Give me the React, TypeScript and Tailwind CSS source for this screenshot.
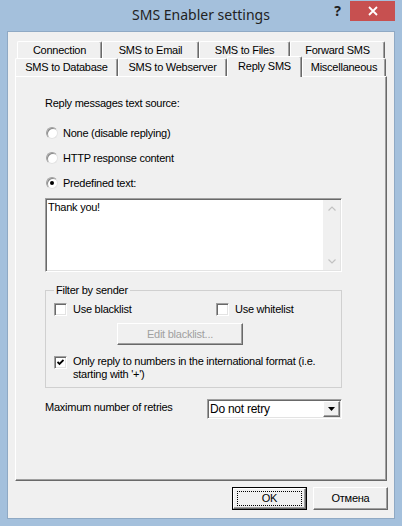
import React from "react";

const raised =
  "border border-t-white border-l-white border-r-[#696969] border-b-[#696969] shadow-[inset_-1px_-1px_0_#a0a0a0]";
const sunken =
  "border border-t-[#a0a0a0] border-l-[#a0a0a0] border-r-white border-b-white shadow-[inset_1px_1px_0_#696969,inset_-1px_-1px_0_#e3e3e3]";

function Tab({ label, width, selected }: { label: string; width: number; selected?: boolean }) {
  return (
    <div
      style={{ width }}
      className={
        "flex items-center justify-center rounded-t-[2px] border-t border-l border-r border-t-white border-l-white border-r-[#696969] bg-[#f0f0f0] shadow-[inset_-1px_0_0_#a0a0a0] " +
        (selected ? "relative z-10 h-[21px] -mb-[1px] pb-[2px]" : "h-[18px]")
      }
    >
      {label}
    </div>
  );
}

function Radio({ label, checked, className }: { label: string; checked?: boolean; className?: string }) {
  return (
    <div className={"flex h-[14px] items-center " + (className ?? "")}>
      <div className="ml-[1px] flex h-[12px] w-[12px] items-center justify-center rounded-full border border-t-[#a0a0a0] border-l-[#a0a0a0] border-r-[#e3e3e3] border-b-[#e3e3e3] bg-white shadow-[inset_1px_1px_0_#8a8a8a]">
        {checked && <div className="h-[4px] w-[4px] rounded-full bg-black" />}
      </div>
      <span className="ml-[5px]">{label}</span>
    </div>
  );
}

function Checkbox({ checked }: { checked?: boolean }) {
  return (
    <div className={"flex h-[13px] w-[13px] shrink-0 items-center justify-center bg-white " + sunken}>
      {checked && (
        <svg width="7" height="7" viewBox="0 0 7 7">
          <path d="M0.5 3 L2.5 5 L6.5 1" stroke="#000" strokeWidth="1.8" fill="none" />
        </svg>
      )}
    </div>
  );
}

function DialogButton({ text, isDefault }: { text: string; isDefault?: boolean }) {
  if (isDefault) {
    return (
      <div className="h-[23px] w-[75px] border border-black">
        <div className={"flex h-full w-full items-center justify-center bg-[#f0f0f0] " + raised}>
          <div className="flex h-[15px] w-[65px] items-center justify-center border border-dotted border-black">
            {text}
          </div>
        </div>
      </div>
    );
  }
  return (
    <div className={"flex h-[23px] w-[75px] items-center justify-center bg-[#f0f0f0] " + raised}>{text}</div>
  );
}

export default function App() {
  return (
    <div className="flex h-[526px] w-[402px] flex-col bg-[#a4c0dc] font-['Liberation_Sans',Arial,sans-serif] text-[11px] leading-[13px] tracking-[-0.25px] text-black">
      {/* title bar */}
      <div className="relative flex h-[31px] items-start">
        <div className="flex h-[31px] flex-1 items-center justify-center pb-[2px] font-['Noto_Sans',sans-serif] text-[14px] tracking-normal text-[#222]">
          SMS Enabler settings
        </div>
        <div className="absolute right-[7px] top-[1px] flex items-start">
          <div className="mr-[9px] mt-[3px] font-['Noto_Sans',sans-serif] text-[14px] font-bold tracking-normal text-[#222]">
            ?
          </div>
          <div className="flex h-[20px] w-[45px] items-center justify-center bg-[#c75050]">
            <svg width="10" height="10" viewBox="0 0 10 10">
              <path d="M1 1 L9 9 M9 1 L1 9" stroke="#fff" strokeWidth="1.8" />
            </svg>
          </div>
        </div>
      </div>

      {/* client area */}
      <div className="mx-[7px] mb-[7px] flex flex-1 flex-col border border-[#8fa9c4] bg-[#f0f0f0]">
        <div className="ml-[9px] mt-[9px] flex h-[17px] items-start">
          <Tab label="Connection" width={85} />
          <Tab label="SMS to Email" width={97} />
          <Tab label="SMS to Files" width={91} />
          <Tab label="Forward SMS" width={95} />
        </div>
        <div className="-mt-[2px] ml-[7px] flex h-[20px] items-end">
          <Tab label="SMS to Database" width={103} />
          <Tab label="SMS to Webserver" width={109} />
          <Tab label="Reply SMS" width={75} selected />
          <Tab label="Miscellaneous" width={84} />
        </div>

        {/* panel */}
        <div className={"ml-[7px] flex h-[405px] w-[372px] flex-col px-[29px] " + raised}>
          <div className="mt-[20px] h-[14px]">Reply messages text source:</div>
          <Radio label="None (disable replying)" className="mt-[15px]" />
          <Radio label="HTTP response content" className="mt-[11px]" />
          <Radio label="Predefined text:" checked className="mt-[11px]" />

          <div className={"mt-[8px] flex h-[74px] w-[297px] bg-white " + sunken}>
            <div className="flex-1 pl-[2px] pt-[2px]">Thank you!</div>
            <div className="my-[1px] mr-[1px] flex w-[17px] flex-col items-center justify-between bg-[#f0f0f0] py-[6px]">
              <svg width="8" height="5" viewBox="0 0 8 5">
                <path d="M0.5 4.5 L4 1 L7.5 4.5" stroke="#c2c2c2" strokeWidth="1.2" fill="none" />
              </svg>
              <svg width="8" height="5" viewBox="0 0 8 5">
                <path d="M0.5 0.5 L4 4 L7.5 0.5" stroke="#c2c2c2" strokeWidth="1.2" fill="none" />
              </svg>
            </div>
          </div>

          <fieldset className="mt-[11px] h-[105px] w-[297px] border border-[#d0d0d0] px-[8px]">
            <legend className="ml-[0px] px-[2px] leading-[14px]">Filter by sender</legend>
            <div className="mt-[6px] flex h-[13px] items-center">
              <div className="flex w-[162px] items-center">
                <Checkbox />
                <span className="ml-[6px]">Use blacklist</span>
              </div>
              <div className="flex items-center">
                <Checkbox />
                <span className="ml-[6px]">Use whitelist</span>
              </div>
            </div>
            <div
              className={
                "ml-[63px] mt-[7px] flex h-[22px] w-[126px] items-center justify-center bg-[#f0f0f0] text-[#a0a0a0] " +
                raised
              }
            >
              Edit blacklist...
            </div>
            <div className="mt-[10px] flex items-start">
              <div className="mt-[1px]">
                <Checkbox checked />
              </div>
              <span className="ml-[6px]">
                Only reply to numbers in the international format (i.e.
                <br />
                starting with '+')
              </span>
            </div>
          </fieldset>

          <div className="mt-[11px] flex h-[20px] w-[297px] items-start">
            <div className="w-[162px] pt-[2px]">Maximum number of retries</div>
            <div className={"flex h-[20px] w-[135px] items-center bg-white " + sunken}>
              <div className="flex-1 pl-[2px] text-[12px]">Do not retry</div>
              <div className={"mr-[1px] flex h-[16px] w-[17px] items-center justify-center bg-[#f0f0f0] " + raised}>
                <svg width="7" height="4" viewBox="0 0 7 4">
                  <path d="M0 0 L7 0 L3.5 4 Z" fill="#000" />
                </svg>
              </div>
            </div>
          </div>
        </div>

        {/* buttons */}
        <div className="mt-[6px] flex justify-end gap-[6px] pr-[6px]">
          <DialogButton text="OK" isDefault />
          <DialogButton text="Отмена" />
        </div>
      </div>
    </div>
  );
}
